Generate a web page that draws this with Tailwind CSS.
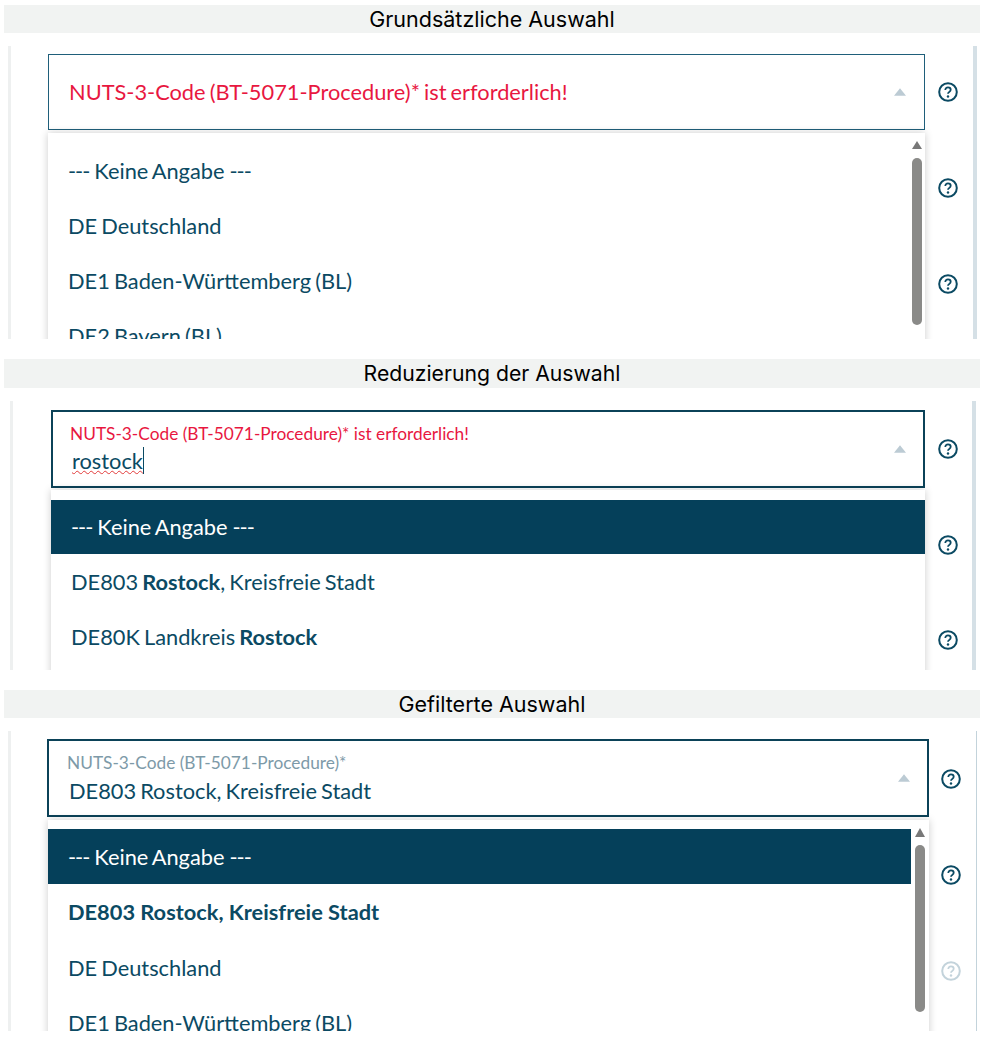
<!DOCTYPE html>
<html lang="de">
<head>
    <meta charset="UTF-8">
    <title>NUTS-3-Code Auswahl</title>
    <script src="https://cdn.jsdelivr.net/npm/@tailwindcss/browser@4"></script>
</head>
<body class="bg-white font-['Lato',sans-serif] text-[21.8px] [word-spacing:-1.5px] text-[#0b4a63]">
    <svg class="hidden" xmlns="http://www.w3.org/2000/svg">
        <symbol id="help" viewBox="0 0 20 20">
            <circle cx="10" cy="10" r="8.8" fill="none" stroke="currentColor" stroke-width="2"/>
            <path d="M7.3 7.9c0-1.5 1.1-2.6 2.7-2.6s2.7 1 2.7 2.4c0 1.1-.6 1.6-1.5 2.2-.8.5-1.2 1-1.2 1.9" fill="none" stroke="currentColor" stroke-width="1.8"/>
            <circle cx="10" cy="14.5" r="1.2" fill="currentColor"/>
        </symbol>
    </svg>

    <div class="pt-[5px] pl-[4px] w-[980px]">
        <!-- Grundsaetzliche Auswahl -->
        <div class="h-[28px] bg-[#f1f3f2] flex items-center justify-center font-['Inter',sans-serif] text-[21.5px] [word-spacing:0] text-black">Grundsätzliche Auswahl</div>
        <div class="mt-[13px] ml-[4px] w-[969px] h-[293px] overflow-hidden flex border-l-[3px] border-l-[#eef0f0] border-r-[4px] border-r-[#d5e0e6] pt-[8px] pl-[37px]">
            <div class="w-[877px] shrink-0">
                <div class="h-[76px] border border-[#1f5f7a] flex items-center justify-between pl-[20px] pr-[18px]">
                    <span class="text-[#e8173f]">NUTS-3-Code (BT-5071-Procedure)* ist erforderlich!</span>
                    <svg class="w-[12px] h-[8px] text-[#bccbd4]" viewBox="0 0 13 8"><path d="M6.5 0L13 8H0z" fill="currentColor"/></svg>
                </div>
                <div class="mt-[3px] h-[240px] bg-white shadow-[0_0_8px_rgba(0,0,0,0.2)] flex pt-[11px]">
                    <div class="flex-1 pl-[20px]">
                        <div class="h-[55px] flex items-center"><span class="tracking-[-1px] mr-[5px]">---</span> Keine Angabe <span class="tracking-[-1px] ml-[5px]">---</span></div>
                        <div class="h-[55px] flex items-center">DE Deutschland</div>
                        <div class="h-[55px] flex items-center">DE1 Baden-Württemberg (BL)</div>
                        <div class="h-[55px] flex items-center">DE2 Bayern (BL)</div>
                    </div>
                    <div class="w-[10px] mr-[3px] -mt-[3px] flex flex-col items-center">
                        <svg class="w-[10px] h-[8px] text-[#787878]" viewBox="0 0 10 8"><path d="M5 0l5 8H0z" fill="currentColor"/></svg>
                        <div class="mt-[9px] w-[10px] h-[167px] rounded-full bg-[#8a8a88]"></div>
                    </div>
                </div>
            </div>
            <div class="ml-[13px] pt-[28px] flex flex-col gap-[76px] text-[#0b4a63]">
                <svg class="w-[20px] h-[20px]"><use href="#help"/></svg>
                <svg class="w-[20px] h-[20px]"><use href="#help"/></svg>
                <svg class="w-[20px] h-[20px]"><use href="#help"/></svg>
            </div>
        </div>

        <!-- Reduzierung der Auswahl -->
        <div class="mt-[20px] h-[29px] bg-[#f1f3f2] flex items-center justify-center font-['Inter',sans-serif] text-[21.2px] [word-spacing:0] text-black">Reduzierung der Auswahl</div>
        <div class="mt-[13px] ml-[6px] w-[966px] h-[269px] overflow-hidden flex border-l-[3px] border-l-[#eef0f0] border-r-[4px] border-r-[#d5e0e6] pt-[9px] pl-[38px]">
            <div class="w-[874px] shrink-0">
                <div class="h-[78px] border-2 border-[#0b4258] flex items-center justify-between pl-[17px] pr-[17px]">
                    <div class="flex flex-col">
                        <span class="text-[#e8173f] text-[17.3px] [word-spacing:0] leading-[20px]">NUTS-3-Code (BT-5071-Procedure)* ist erforderlich!</span>
                        <span class="pl-[2px] leading-[28px] mt-[3px]"><span class="border-r border-[#0b4a63] underline decoration-wavy decoration-[#e23b3b] decoration-1">rostock</span></span>
                    </div>
                    <svg class="w-[12px] h-[8px] text-[#bccbd4]" viewBox="0 0 13 8"><path d="M6.5 0L13 8H0z" fill="currentColor"/></svg>
                </div>
                <div class="mt-[2px] h-[200px] bg-white shadow-[0_0_8px_rgba(0,0,0,0.2)] pt-[10px]">
                    <div class="h-[54px] flex items-center pl-[20px] bg-[#05405a] text-white"><span class="tracking-[-1px] mr-[5px]">---</span> Keine Angabe <span class="tracking-[-1px] ml-[5px]">---</span></div>
                    <div class="h-[55px] flex items-center pl-[20px] pt-[2px]"><span>DE803 <b>Rostock</b>, Kreisfreie Stadt</span></div>
                    <div class="h-[55px] flex items-center pl-[20px] pt-[2px]"><span>DE80K Landkreis <b>Rostock</b></span></div>
                </div>
            </div>
            <div class="ml-[13px] pt-[29px] flex flex-col gap-[75.5px] text-[#0b4a63]">
                <svg class="w-[20px] h-[20px]"><use href="#help"/></svg>
                <svg class="w-[20px] h-[20px]"><use href="#help"/></svg>
                <svg class="w-[20px] h-[20px]"><use href="#help"/></svg>
            </div>
        </div>

        <!-- Gefilterte Auswahl -->
        <div class="mt-[20px] h-[28px] bg-[#f1f3f2] flex items-center justify-center font-['Inter',sans-serif] text-[21.5px] [word-spacing:0] text-black">Gefilterte Auswahl</div>
        <div class="mt-[13px] ml-[4px] w-[969px] h-[300px] overflow-hidden flex border-l-[3px] border-l-[#eef0f0] border-r border-r-[#c3d3db] pt-[8px] pl-[36px]">
            <div class="w-[882px] shrink-0">
                <div class="h-[78px] border-2 border-[#0b4258] flex items-center justify-between pl-[18px] pr-[17px]">
                    <div class="flex flex-col">
                        <span class="text-[#7d9aa8] text-[17.3px] [word-spacing:0] leading-[20px] pt-[1px]">NUTS-3-Code (BT-5071-Procedure)*</span>
                        <span class="pl-[2px] leading-[28px] mt-[4px]">DE803 Rostock, Kreisfreie Stadt</span>
                    </div>
                    <svg class="w-[12px] h-[8px] text-[#bccbd4]" viewBox="0 0 13 8"><path d="M6.5 0L13 8H0z" fill="currentColor"/></svg>
                </div>
                <div class="mt-[3px] ml-[1px] h-[220px] bg-white shadow-[0_0_8px_rgba(0,0,0,0.2)] flex pt-[9px]">
                    <div class="flex-1">
                        <div class="h-[55px] flex items-center pl-[20px] pt-[2px] bg-[#05405a] text-white"><span class="tracking-[-1px] mr-[5px]">---</span> Keine Angabe <span class="tracking-[-1px] ml-[5px]">---</span></div>
                        <div class="h-[56px] flex items-center pl-[20px] font-bold [word-spacing:0]">DE803 Rostock, Kreisfreie Stadt</div>
                        <div class="h-[56px] flex items-center pl-[20px]">DE Deutschland</div>
                        <div class="h-[55px] flex items-center pl-[20px]">DE1 Baden-Württemberg (BL)</div>
                    </div>
                    <div class="w-[10px] ml-[4px] mr-[4px] -mt-[1px] flex flex-col items-center">
                        <svg class="w-[10px] h-[9px] text-[#787878]" viewBox="0 0 10 9"><path d="M5 0l5 9H0z" fill="currentColor"/></svg>
                        <div class="mt-[8px] w-[10px] h-[167px] rounded-full bg-[#8a8a88]"></div>
                    </div>
                </div>
            </div>
            <div class="ml-[12px] pt-[30px] flex flex-col gap-[76px] text-[#0b4a63]">
                <svg class="w-[20px] h-[20px]"><use href="#help"/></svg>
                <svg class="w-[20px] h-[20px]"><use href="#help"/></svg>
                <svg class="w-[20px] h-[20px] text-[#c3d3db]"><use href="#help"/></svg>
            </div>
        </div>
    </div>
</body>
</html>
